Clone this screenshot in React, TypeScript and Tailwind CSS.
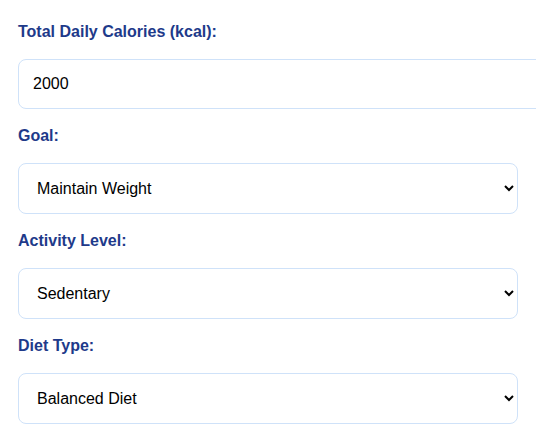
import React from "react";

const labelCls =
  "block text-[16px] leading-[17px] font-bold text-[#1e3a8a] mb-[19px]";
const fieldCls =
  "block rounded-lg border border-[#cfe2f9] bg-white px-[14px] text-[16px] text-black outline-none";

export default function App() {
  return (
    <div
      className="w-[536px] h-[440px] overflow-hidden bg-white pl-[18px] pt-[23px]"
      style={{ fontFamily: '"Liberation Sans", Arial, sans-serif' }}
    >
      <div className="mb-[18px]">
        <label className={labelCls}>Total Daily Calories (kcal):</label>
        <input className={fieldCls + " h-[50px] w-[532px]"} defaultValue="2000" type="number" />
      </div>
      <div className="mb-[18px]">
        <label className={labelCls}>Goal:</label>
        <select className={fieldCls + " h-[51px] w-[500px]"} defaultValue="maintain">
          <option value="maintain">Maintain Weight</option>
          <option value="lose">Lose Weight</option>
          <option value="gain">Gain Weight</option>
        </select>
      </div>
      <div className="mb-[18px]">
        <label className={labelCls}>Activity Level:</label>
        <select className={fieldCls + " h-[51px] w-[500px]"} defaultValue="sedentary">
          <option value="sedentary">Sedentary</option>
          <option value="light">Lightly Active</option>
          <option value="moderate">Moderately Active</option>
        </select>
      </div>
      <div className="mb-[18px]">
        <label className={labelCls}>Diet Type:</label>
        <select className={fieldCls + " h-[51px] w-[500px]"} defaultValue="balanced">
          <option value="balanced">Balanced Diet</option>
          <option value="keto">Keto</option>
          <option value="vegan">Vegan</option>
        </select>
      </div>
    </div>
  );
}
